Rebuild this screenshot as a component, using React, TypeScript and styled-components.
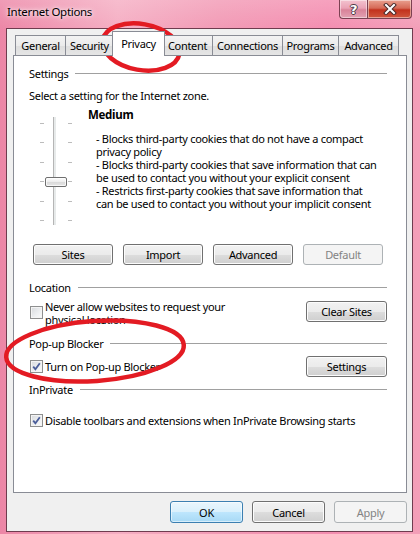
import React from 'react';
import styled, { createGlobalStyle } from 'styled-components';

const FONT = `"Noto Sans", "Liberation Sans", sans-serif`;

const GlobalStyle = createGlobalStyle`
  html, body { margin: 0; padding: 0; background: #ffffff; }
  body { font-family: ${FONT}; font-size: 11px; }
  * { box-sizing: border-box; }
`;

const Frame = styled.div`
  position: relative;
  width: 420px;
  height: 534px;
  display: flex;
  flex-direction: column;
  padding: 0 7px 2px 6px;
  background:
    linear-gradient(180deg, rgba(255,255,255,0.18) 0%, rgba(255,255,255,0) 30px),
    linear-gradient(90deg, #ec86a6 0%, #f5aec3 28%, #f29ab5 52%, #f48db0 78%, #f39fb8 100%);
  font-family: ${FONT};
  font-size: 11px;
  letter-spacing: -0.3px;
  color: #000;
`;

const TitleBar = styled.div`
  height: 28px;
  display: flex;
  align-items: flex-start;
  margin-right: 1px;
`;

const Title = styled.div`
  padding: 4px 0 0 1px;
  line-height: 16px;
  font-size: 11.5px;
  color: #000;
  text-shadow: 0 0 6px rgba(255, 255, 255, 0.95), 0 0 3px rgba(255, 255, 255, 0.8);
`;

const Caption = styled.div`
  margin-left: auto;
  display: flex;
`;

const CaptionButton = styled.div<{ $kind: 'help' | 'close' }>`
  width: ${p => (p.$kind === 'help' ? 28 : 45)}px;
  height: 19px;
  display: flex;
  align-items: center;
  justify-content: center;
  border: 1px solid #7b4152;
  border-top: none;
  ${p => (p.$kind === 'help' ? 'border-right: none;' : '')}
  border-radius: ${p => (p.$kind === 'help' ? '0 0 0 4px' : '0 0 4px 0')};
  background: ${p =>
    p.$kind === 'help'
      ? 'linear-gradient(180deg, #f3c3cf 0%, #eaa3b6 45%, #d98399 55%, #e3a2b3 100%)'
      : 'linear-gradient(180deg, #e9a08f 0%, #d66a56 45%, #c2321d 55%, #d0573e 100%)'};
  box-shadow: inset 0 0 0 1px rgba(255, 255, 255, 0.45);
`;

const HelpGlyph = styled.span`
  font-family: "DejaVu Sans", sans-serif;
  font-weight: bold;
  font-size: 13px;
  line-height: 13px;
  color: #ffffff;
  text-shadow: -1px 0 #4d3b45, 1px 0 #4d3b45, 0 -1px #4d3b45, 0 1px #4d3b45;
`;

const Client = styled.div`
  flex: 1;
  display: flex;
  flex-direction: column;
  border: 1px solid #6e3c4e;
  background: #f0f0f0;
`;

const TabStrip = styled.div`
  position: relative;
  z-index: 1;
  height: 27px;
  margin-bottom: -1px;
  padding: 0 0 0 8px;
  display: flex;
  align-items: flex-end;
`;

const Tab = styled.div<{ $w: number; $selected?: boolean }>`
  position: relative;
  flex: none;
  width: ${p => p.$w}px;
  height: ${p => (p.$selected ? 25 : 21)}px;
  margin: ${p => (p.$selected ? '0 -2px 0 -2px' : '0 0 0 -1px')};
  z-index: ${p => (p.$selected ? 2 : 1)};
  display: flex;
  align-items: center;
  justify-content: center;
  padding-bottom: ${p => (p.$selected ? 1 : 0)}px;
  border: 1px solid #898c95;
  border-bottom: ${p => (p.$selected ? 'none' : '1px solid #898c95')};
  background: ${p =>
    p.$selected ? '#ffffff' : 'linear-gradient(180deg, #f3f3f3 0%, #ebebeb 50%, #dedede 51%, #e5e5e5 100%)'};
  white-space: nowrap;
  &:first-child {
    margin-left: 0;
  }
`;

const Panel = styled.div`
  flex: 1;
  margin: 0 5px 0 6px;
  padding: 9px 19px 0 15px;
  background: #ffffff;
  border: 1px solid #898c95;
  display: flex;
  flex-direction: column;
`;

const GroupHeader = styled.div<{ $mt: number }>`
  display: flex;
  align-items: center;
  gap: 7px;
  height: 16px;
  margin-top: ${p => p.$mt}px;
  white-space: nowrap;
`;

const GroupLine = styled.div`
  flex: 1;
  height: 1px;
  background: #a0a0a0;
`;

const Line = styled.div<{ $mt: number }>`
  margin-top: ${p => p.$mt}px;
  line-height: 16px;
  white-space: nowrap;
`;

const SettingsBody = styled.div`
  display: flex;
  margin-top: 3px;
  padding-left: 11px;
`;

const Slider = styled.div`
  position: relative;
  flex: none;
  width: 32px;
  height: 108px;
  margin-top: 10px;
  display: flex;
  flex-direction: column;
  justify-content: space-between;
  padding: 6px 0 4px;
`;

const Track = styled.div`
  position: absolute;
  left: 13px;
  top: 0;
  width: 4px;
  height: 108px;
  background: #e7eaea;
  border-left: 1px solid #b5b5b5;
  border-right: 1px solid #ffffff;
`;

const TickRow = styled.div`
  display: flex;
  justify-content: space-between;
  height: 1px;
`;

const Tick = styled.div`
  width: 4px;
  height: 1px;
  background: #bcbcbc;
`;

const Thumb = styled.div`
  position: absolute;
  left: 5px;
  top: 60px;
  width: 22px;
  height: 10px;
  border: 1px solid #6f6f6f;
  border-radius: 2px;
  background: linear-gradient(180deg, #fdfdfd 0%, #ececec 50%, #d9d9d9 51%, #e6e6e6 100%);
  box-shadow: inset 0 0 0 1px rgba(255, 255, 255, 0.7);
`;

const Description = styled.div`
  margin-left: 16px;
  display: flex;
  flex-direction: column;
`;

const LevelName = styled.div`
  font-weight: bold;
  line-height: 16px;
  font-size: 11.5px;
`;

const Bullets = styled.div`
  margin-top: 9px;
  padding-left: 8px;
  line-height: 13px;
  white-space: nowrap;
`;

const ButtonRow = styled.div`
  display: flex;
  gap: 10px;
  margin-top: 19px;
  padding-left: 4px;
`;

const PushButton = styled.button<{ $w: number; $h?: number; $variant?: 'default' | 'disabled' }>`
  width: ${p => p.$w}px;
  height: ${p => p.$h ?? 21}px;
  flex: none;
  padding: 0;
  font-family: ${FONT};
  font-size: 11px;
  letter-spacing: -0.3px;
  border-radius: 3px;
  border: 1px solid
    ${p => (p.$variant === 'default' ? '#3c7fb1' : p.$variant === 'disabled' ? '#adb2b5' : '#707070')};
  color: ${p => (p.$variant === 'disabled' ? '#838383' : '#000000')};
  background: ${p =>
    p.$variant === 'default'
      ? 'linear-gradient(180deg, #eaf6fd 0%, #d9f0fc 50%, #bee6fd 51%, #a7d9f5 100%)'
      : p.$variant === 'disabled'
      ? '#f4f4f4'
      : 'linear-gradient(180deg, #f2f2f2 0%, #ebebeb 50%, #dddddd 51%, #cfcfcf 100%)'};
  box-shadow: inset 0 0 0 1px
    ${p => (p.$variant === 'default' ? 'rgba(255,255,255,0.55)' : p.$variant === 'disabled' ? '#f4f4f4' : '#fcfcfc')};
`;

const OptionRow = styled.div<{ $mt: number; $align?: string; $h?: number }>`
  display: flex;
  align-items: ${p => p.$align ?? 'center'};
  margin-top: ${p => p.$mt}px;
  ${p => (p.$h ? `height: ${p.$h}px;` : '')}
`;

const Box = styled.span<{ $offset?: number }>`
  flex: none;
  width: 13px;
  height: 13px;
  margin-left: 1px;
  margin-top: ${p => p.$offset ?? 0}px;
  border: 1px solid #8e8f8f;
  background: linear-gradient(135deg, #d7d9dc 0%, #eef0f2 60%, #fbfbfb 100%);
  box-shadow: inset 0 0 0 1px #f4f4f4;
  display: flex;
  align-items: center;
  justify-content: center;
`;

const OptionLabel = styled.span`
  margin-left: 2px;
  line-height: 13px;
  white-space: nowrap;
`;

const PushRight = styled.div<{ $mt?: number }>`
  margin-left: auto;
  margin-top: ${p => p.$mt ?? 0}px;
`;

const Footer = styled.div`
  display: flex;
  justify-content: flex-end;
  gap: 9px;
  padding: 8px 5px 8px 0;
`;

const Overlay = styled.svg`
  position: absolute;
  left: 0;
  top: 0;
  pointer-events: none;
`;

const CheckBox: React.FC<{ checked?: boolean; offset?: number }> = ({ checked, offset }) => (
  <Box $offset={offset}>
    {checked && (
      <svg width="9" height="9" viewBox="0 0 9 9">
        <path d="M1.2 4.6 L3.4 7.2 L7.8 1.2" fill="none" stroke="#4b5e9a" strokeWidth="1.8" />
      </svg>
    )}
  </Box>
);

const tabs: { label: string; w: number; selected?: boolean }[] = [
  { label: 'General', w: 51 },
  { label: 'Security', w: 49 },
  { label: 'Privacy', w: 53, selected: true },
  { label: 'Content', w: 51 },
  { label: 'Connections', w: 71 },
  { label: 'Programs', w: 57 },
  { label: 'Advanced', w: 61 },
];

export default function App() {
  return (
    <>
      <GlobalStyle />
      <Frame>
        <TitleBar>
          <Title>Internet Options</Title>
          <Caption>
            <CaptionButton $kind="help">
              <HelpGlyph>?</HelpGlyph>
            </CaptionButton>
            <CaptionButton $kind="close">
              <svg width="14" height="12" viewBox="0 0 14 12">
                <path d="M3 2 L11 10 M11 2 L3 10" stroke="#4a2a2a" strokeWidth="4" strokeLinecap="square" />
                <path d="M3 2 L11 10 M11 2 L3 10" stroke="#ffffff" strokeWidth="2" strokeLinecap="square" />
              </svg>
            </CaptionButton>
          </Caption>
        </TitleBar>
        <Client>
          <TabStrip>
            {tabs.map(t => (
              <Tab key={t.label} $w={t.w} $selected={t.selected}>
                {t.label}
              </Tab>
            ))}
          </TabStrip>
          <Panel>
            <GroupHeader $mt={0}>
              Settings
              <GroupLine />
            </GroupHeader>
            <Line $mt={7}>Select a setting for the Internet zone.</Line>
            <SettingsBody>
              <Slider>
                <Track />
                {[0, 1, 2, 3, 4, 5].map(i => (
                  <TickRow key={i}>
                    <Tick />
                    <Tick />
                  </TickRow>
                ))}
                <Thumb />
              </Slider>
              <Description>
                <LevelName>Medium</LevelName>
                <Bullets>
                  - Blocks third-party cookies that do not have a compact
                  <br />
                  privacy policy
                  <br />
                  - Blocks third-party cookies that save information that can
                  <br />
                  be used to contact you without your explicit consent
                  <br />
                  - Restricts first-party cookies that save information that
                  <br />
                  can be used to contact you without your implicit consent
                </Bullets>
              </Description>
            </SettingsBody>
            <ButtonRow>
              <PushButton $w={80}>Sites</PushButton>
              <PushButton $w={80}>Import</PushButton>
              <PushButton $w={80}>Advanced</PushButton>
              <PushButton $w={80} $variant="disabled">
                Default
              </PushButton>
            </ButtonRow>

            <GroupHeader $mt={14}>
              Location
              <GroupLine />
            </GroupHeader>
            <OptionRow $mt={5} $align="flex-start">
              <CheckBox offset={6} />
              <OptionLabel>
                Never allow websites to request your
                <br />
                physical location
              </OptionLabel>
              <PushRight $mt={1}>
                <PushButton $w={81}>Clear Sites</PushButton>
              </PushRight>
            </OptionRow>

            <GroupHeader $mt={9}>
              Pop-up Blocker
              <GroupLine />
            </GroupHeader>
            <OptionRow $mt={5} $h={21}>
              <CheckBox checked />
              <OptionLabel>Turn on Pop-up Blocker</OptionLabel>
              <PushRight>
                <PushButton $w={81}>Settings</PushButton>
              </PushRight>
            </OptionRow>

            <GroupHeader $mt={4}>
              InPrivate
              <GroupLine />
            </GroupHeader>
            <OptionRow $mt={17} $h={13}>
              <CheckBox checked />
              <OptionLabel>Disable toolbars and extensions when InPrivate Browsing starts</OptionLabel>
            </OptionRow>
          </Panel>
          <Footer>
            <PushButton $w={73} $h={22} $variant="default">
              OK
            </PushButton>
            <PushButton $w={73} $h={22}>
              Cancel
            </PushButton>
            <PushButton $w={73} $h={22} $variant="disabled">
              Apply
            </PushButton>
          </Footer>
        </Client>
        <Overlay width="420" height="534" viewBox="0 0 420 534">
          <ellipse
            cx="141"
            cy="47"
            rx="39"
            ry="23"
            transform="rotate(10 141 47)"
            fill="none"
            stroke="#e31b23"
            strokeWidth="4.5"
          />
          <ellipse
            cx="95"
            cy="351"
            rx="89"
            ry="30"
            transform="rotate(-4 95 351)"
            fill="none"
            stroke="#e31b23"
            strokeWidth="4.5"
          />
        </Overlay>
      </Frame>
    </>
  );
}
